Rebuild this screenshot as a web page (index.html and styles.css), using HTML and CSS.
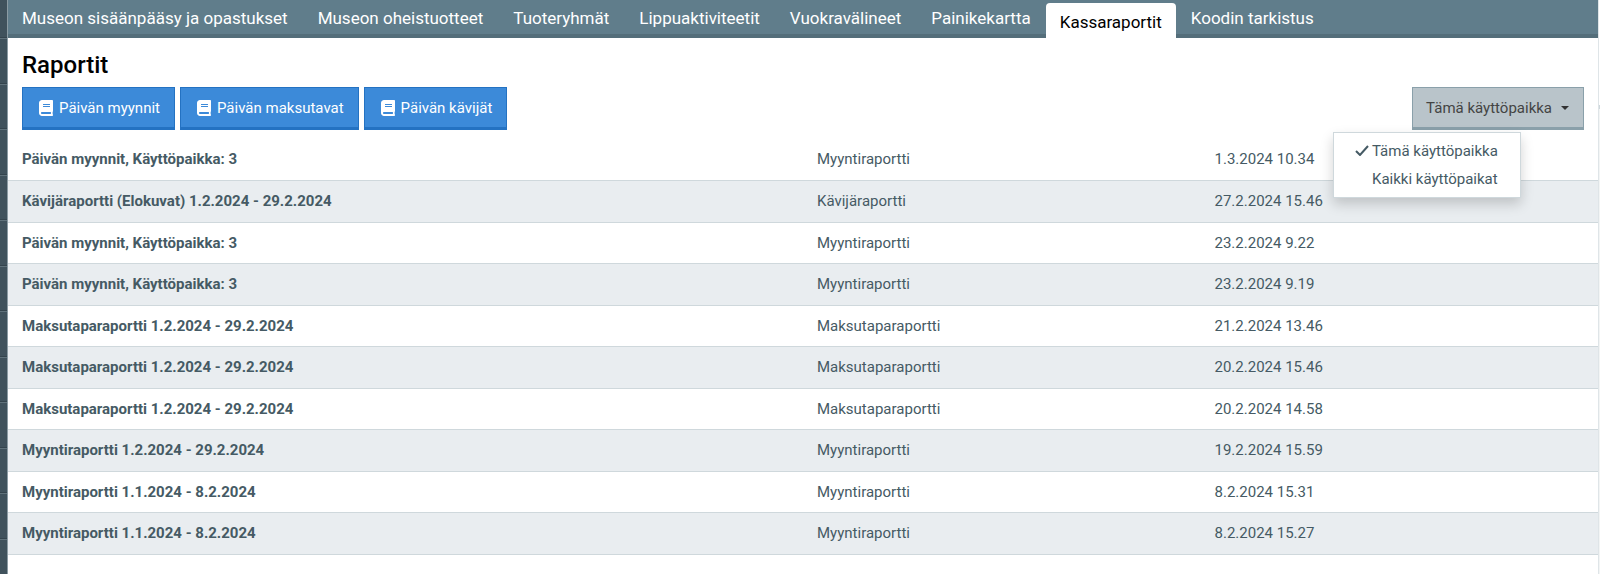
FILE: index.html
```
<!DOCTYPE html>
<html lang="fi">
  <head>
    <meta charset="UTF-8" />
    <meta name="viewport" content="width=device-width, initial-scale=1.0" />
    <title>Kassaraportit</title>
    <link rel="stylesheet" href="styles.css">
  </head>
  <body>
    <svg width="0" height="0" class="sprite" aria-hidden="true">
      <symbol id="icon-book" viewBox="0 0 448 512">
        <path d="M448 360V24c0-13.300-10.700-24-24-24H96C43 0 0 43 0 96v320c0 53 43 96 96 96h328c13.300 0 24-10.700 24-24v-16c0-7.500-3.500-14.300-8.900-18.700-4.200-15.400-4.200-59.300 0-74.700 5.400-4.300 8.900-11.100 8.900-18.600zM128 134c0-3.300 2.700-6 6-6h212c3.300 0 6 2.700 6 6v20c0 3.300-2.700 6-6 6H134c-3.300 0-6-2.700-6-6v-20zm0 64c0-3.300 2.700-6 6-6h212c3.300 0 6 2.700 6 6v20c0 3.300-2.700 6-6 6H134c-3.300 0-6-2.700-6-6v-20zm253.400 250H96c-17.700 0-32-14.300-32-32 0-17.600 14.400-32 32-32h285.400c-1.900 17.100-1.900 46.900 0 64z" />
      </symbol>
    </svg>

    <div class="sidebar"></div>

    <div class="panel">
      <nav class="tabs">
        <a href="#">Museon sisäänpääsy ja opastukset</a>
        <a href="#">Museon oheistuotteet</a>
        <a href="#">Tuoteryhmät</a>
        <a href="#">Lippuaktiviteetit</a>
        <a href="#">Vuokravälineet</a>
        <a href="#">Painikekartta</a>
        <a href="#" class="active">Kassaraportit</a>
        <a href="#">Koodin tarkistus</a>
      </nav>

      <main>
        <h1>Raportit</h1>

        <div class="toolbar">
          <button class="btn btn-primary"><svg class="icon"><use href="#icon-book" /></svg>Päivän myynnit</button>
          <button class="btn btn-primary"><svg class="icon"><use href="#icon-book" /></svg>Päivän maksutavat</button>
          <button class="btn btn-primary"><svg class="icon"><use href="#icon-book" /></svg>Päivän kävijät</button>

          <div class="dropdown">
            <button class="btn btn-default" aria-expanded="true">Tämä käyttöpaikka<span class="caret"></span></button>
            <ul class="dropdown-menu">
              <li>
                <a href="#"><svg class="check" viewBox="0 0 14 11"><path d="M1 6l4 4 8-9" /></svg>Tämä käyttöpaikka</a>
              </li>
              <li><a href="#">Kaikki käyttöpaikat</a></li>
            </ul>
          </div>
        </div>

        <table class="reports">
          <tbody>
            <tr><th scope="row">Päivän myynnit, Käyttöpaikka: 3</th><td>Myyntiraportti</td><td>1.3.2024 10.34</td></tr>
            <tr><th scope="row">Kävijäraportti (Elokuvat) 1.2.2024 - 29.2.2024</th><td>Kävijäraportti</td><td>27.2.2024 15.46</td></tr>
            <tr><th scope="row">Päivän myynnit, Käyttöpaikka: 3</th><td>Myyntiraportti</td><td>23.2.2024 9.22</td></tr>
            <tr><th scope="row">Päivän myynnit, Käyttöpaikka: 3</th><td>Myyntiraportti</td><td>23.2.2024 9.19</td></tr>
            <tr><th scope="row">Maksutaparaportti 1.2.2024 - 29.2.2024</th><td>Maksutaparaportti</td><td>21.2.2024 13.46</td></tr>
            <tr><th scope="row">Maksutaparaportti 1.2.2024 - 29.2.2024</th><td>Maksutaparaportti</td><td>20.2.2024 15.46</td></tr>
            <tr><th scope="row">Maksutaparaportti 1.2.2024 - 29.2.2024</th><td>Maksutaparaportti</td><td>20.2.2024 14.58</td></tr>
            <tr><th scope="row">Myyntiraportti 1.2.2024 - 29.2.2024</th><td>Myyntiraportti</td><td>19.2.2024 15.59</td></tr>
            <tr><th scope="row">Myyntiraportti 1.1.2024 - 8.2.2024</th><td>Myyntiraportti</td><td>8.2.2024 15.31</td></tr>
            <tr><th scope="row">Myyntiraportti 1.1.2024 - 8.2.2024</th><td>Myyntiraportti</td><td>8.2.2024 15.27</td></tr>
          </tbody>
        </table>
      </main>
    </div>

    <div class="rail"></div>
  </body>
</html>
```
FILE: styles.css
```
* {
  box-sizing: border-box;
}
body {
  margin: 0;
  min-height: 100vh;
  display: flex;
  font-family: Roboto, "Noto Sans", sans-serif;
  font-size: 15px;
  line-height: 24px;
  color: #455a64;
  background-color: #fff;
}
.sprite {
  position: absolute;
}
.sidebar {
  width: 8px;
  flex: none;
  border-right: 1px solid #8b9ba3;
  background: repeating-linear-gradient(
    #40525c 0,
    #40525c 37px,
    #34444d 37px,
    #34444d 38px,
    #60727b 38px,
    #60727b 39px,
    #40525c 39px,
    #40525c 83px,
    #34444d 83px,
    #34444d 84px,
    #60727b 84px,
    #60727b 85px,
    #40525c 85px,
    #40525c 91px
  );
}
.panel {
  flex: 1;
  min-width: 0;
}

/* tabs */
.tabs {
  display: flex;
  height: 38px;
  padding-left: 0;
  background-color: #607d8b;
  box-shadow: inset 0 -4px #546e7a;
}
.tabs a {
  padding: 6px 15px;
  font-size: 17px;
  color: #fff;
  text-decoration: none;
  white-space: nowrap;
}
.tabs a:first-child {
  padding-left: 14px;
}
.tabs .active {
  margin-top: 3px;
  padding: 7px 14px;
  color: #000;
  background-color: #fff;
  border-radius: 4px 4px 0 0;
}

h1 {
  margin: 0;
  padding: 12px 14px 7px;
  font-size: 24px;
  font-weight: 500;
  line-height: 30px;
  color: #000;
}

/* buttons */
.toolbar {
  display: flex;
  gap: 5px;
  padding: 0 14px;
}
.btn {
  display: flex;
  align-items: center;
  height: 43px;
  padding: 0 13px;
  border: 1px solid;
  border-bottom-width: 3px;
  font: inherit;
  white-space: nowrap;
  cursor: pointer;
}
.btn-primary {
  padding: 0 14px 0 16px;
  color: #fff;
  background-color: #3c8ad9;
  border-color: #2472c2;
}
.btn-default {
  color: #444;
  background-color: #b9c4ca;
  border-color: #8aa0aa;
}
.icon {
  width: 14px;
  height: 16px;
  margin-right: 6px;
  fill: currentColor;
}
.caret {
  margin-left: 9px;
  margin-right: 1px;
  border-top: 4px solid #333;
  border-left: 4px solid transparent;
  border-right: 4px solid transparent;
}

/* dropdown */
.dropdown {
  position: relative;
  margin-left: auto;
}
.dropdown-menu {
  position: absolute;
  top: 45px;
  right: 63px;
  width: 188px;
  margin: 0;
  padding: 4px 0;
  list-style: none;
  background-color: #fff;
  border: 1px solid #cfd8dc;
  box-shadow: 0 6px 12px rgba(0, 0, 0, 0.18);
}
.dropdown-menu a {
  position: relative;
  display: block;
  padding: 2px 0 2px 38px;
  color: #455a64;
  text-decoration: none;
  white-space: nowrap;
}
.check {
  position: absolute;
  left: 21px;
  top: 8px;
  width: 14px;
  height: 11px;
  fill: none;
  stroke: #455a64;
  stroke-width: 2;
}

/* reports */
.reports {
  width: 100%;
  margin-top: 9px;
  border-collapse: collapse;
  table-layout: fixed;
}
.reports th,
.reports td {
  height: 41px;
  padding: 0 14px;
  text-align: left;
}
.reports th {
  width: 50%;
  font-weight: 700;
}
.reports tr:nth-child(even) {
  background-color: #e9edf0;
  border-top: 1px solid #cfd8dc;
  border-bottom: 1px solid #cfd8dc;
}
.reports tr:nth-child(even) > * {
  height: 42px;
}

.rail {
  width: 2px;
  flex: none;
  border-left: 1px solid #dfe5e8;
  background: linear-gradient(#fff 105px, #cfd8dc 105px, #cfd8dc 109px, #f3f5f5 109px);
}
```
